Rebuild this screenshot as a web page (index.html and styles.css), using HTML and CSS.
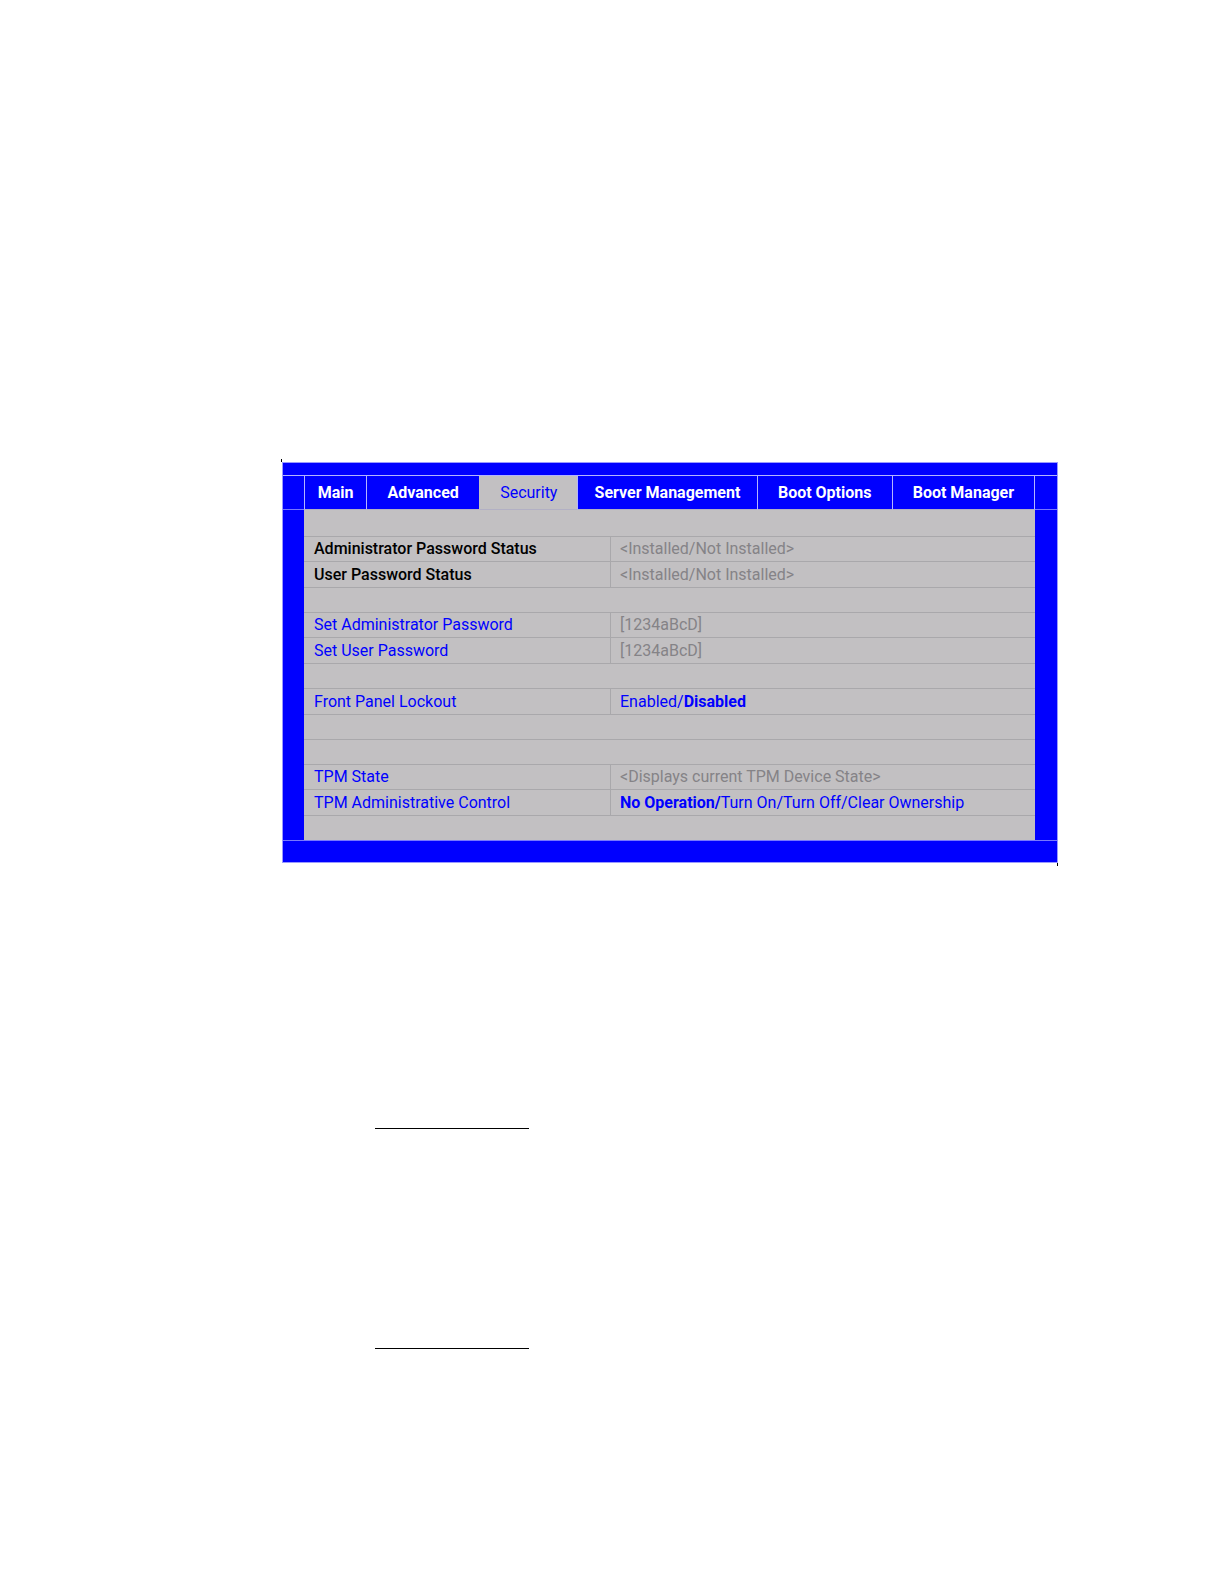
FILE: index.html
```html
<!DOCTYPE html>
<html lang="en">

<head>
    <meta name="viewport" content="width=device-width, initial-scale=1">
    <meta charset="UTF-8">
    <title>BIOS Setup - Security</title>

    <link rel="stylesheet" href="styles.css">
</head>

<body>
    <main class="page">
        <section class="setup">
            <nav class="tabs">
                <a href="#main">Main</a>
                <a href="#advanced">Advanced</a>
                <a href="#security" class="active" aria-current="page">Security</a>
                <a href="#server">Server Management</a>
                <a href="#options">Boot Options</a>
                <a href="#manager">Boot Manager</a>
            </nav>

            <div class="screen">
                <table class="settings">
                    <colgroup>
                        <col class="name">
                        <col>
                    </colgroup>
                    <tbody>
                        <tr class="blank first"><td colspan="2"></td></tr>
                    </tbody>
                    <tbody>
                        <tr class="status">
                            <th scope="row">Administrator Password Status</th>
                            <td class="info">&lt;Installed/Not Installed&gt;</td>
                        </tr>
                        <tr class="status">
                            <th scope="row">User Password Status</th>
                            <td class="info">&lt;Installed/Not Installed&gt;</td>
                        </tr>
                    </tbody>
                    <tbody>
                        <tr class="blank"><td colspan="2"></td></tr>
                    </tbody>
                    <tbody>
                        <tr>
                            <th scope="row">Set Administrator Password</th>
                            <td class="info">[1234aBcD]</td>
                        </tr>
                        <tr>
                            <th scope="row">Set User Password</th>
                            <td class="info">[1234aBcD]</td>
                        </tr>
                    </tbody>
                    <tbody>
                        <tr class="blank"><td colspan="2"></td></tr>
                    </tbody>
                    <tbody>
                        <tr>
                            <th scope="row">Front Panel Lockout</th>
                            <td>Enabled/<b>Disabled</b></td>
                        </tr>
                    </tbody>
                    <tbody>
                        <tr class="blank"><td colspan="2"></td></tr>
                        <tr class="blank"><td colspan="2"></td></tr>
                    </tbody>
                    <tbody>
                        <tr>
                            <th scope="row">TPM State</th>
                            <td class="info">&lt;Displays current TPM Device State&gt;</td>
                        </tr>
                        <tr>
                            <th scope="row">TPM Administrative Control</th>
                            <td><b>No Operation/</b>Turn On/Turn Off/Clear Ownership</td>
                        </tr>
                    </tbody>
                    <tbody>
                        <tr class="blank"><td colspan="2"></td></tr>
                    </tbody>
                </table>
            </div>
        </section>

        <hr class="rule">
        <hr class="rule">
    </main>
</body>

</html>
```

FILE: styles.css
```css
* {
    box-sizing: border-box;
}

body {
    margin: 0;
    background: #fff;
    font: 16px/20px Roboto, "Liberation Sans", sans-serif;
}

.page {
    padding: 462px 166px 235px 282px;
}

.setup {
    position: relative;
    padding-top: 12px;
    border: 1px solid #9a9aff;
    background: #00f;
    color: #00f;
}

/* crop marks at the two outer corners */
.setup::before,
.setup::after {
    content: "";
    position: absolute;
    width: 1px;
    height: 3px;
    background: #000;
}

.setup::before {
    top: -4px;
    left: -2px;
}

.setup::after {
    right: -1px;
    bottom: -4px;
}

.tabs {
    display: grid;
    grid-template-columns: 21px 62fr 113fr 98fr 179fr 135fr 143fr 22px;
    border-top: 1px solid #b4b4ff;
}

/* side cells of the tab row */
.tabs::before,
.tabs::after {
    content: "";
    border-bottom: 1px solid #7878ff;
}

.tabs a {
    height: 34px;
    border-left: 1px solid #b4b4ff;
    border-bottom: 1px solid #b2b0c4;
    color: #fff;
    font-weight: 700;
    line-height: 33px;
    text-align: center;
    text-decoration: none;
    white-space: nowrap;
}

.tabs a:last-child {
    border-right: 1px solid #b4b4ff;
}

.tabs .active {
    border-left-color: #c2c0c2;
    background: #c2c0c2;
    color: #00f;
    font-weight: 400;
}

.screen {
    padding: 0 22px 0 21px;
    border-bottom: 1px solid #7878ff;
    margin-bottom: 21px;
}

.settings {
    width: 100%;
    table-layout: fixed;
    border-spacing: 0;
    background: #c2c0c2;
}

.settings .name {
    width: 42%;
}

.settings th,
.settings td {
    height: 25px;
    padding: 0 9px;
    border-bottom: 1px solid #a9a8ab;
    font-weight: 400;
    text-align: left;
    white-space: nowrap;
}

.settings th {
    border-right: 1px solid #a9a8ab;
    padding-left: 10px;
}

.settings tbody:not(:first-child) tr:not(.blank):last-child > * {
    height: 26px;
}

.settings .first td {
    height: 27px;
}

.settings tbody:last-child td {
    height: 24px;
    border-bottom: 0;
}

.settings .status th {
    color: #000;
    font-weight: 500;
}

.settings .info {
    color: #858387;
}

.settings b {
    font-weight: 700;
}

.rule {
    width: 154px;
    margin: 265px 0 0 93px;
    border: 0;
    border-top: 1px solid #000;
}

.rule + .rule {
    margin-top: 219px;
}
```
